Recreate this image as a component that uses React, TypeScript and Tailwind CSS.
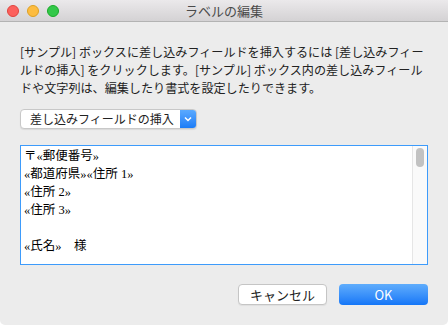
export default function App() {
  const lines = ["〒«郵便番号»", "«都道府県»«住所 1»", "«住所 2»", "«住所 3»", "", "«氏名»　様"];

  return (
    <div
      className="flex h-[325px] w-[448px] flex-col overflow-hidden rounded-b-[5px] bg-[#ececec] text-[#222]"
      style={{ fontFamily: '"Noto Sans CJK JP", "Liberation Sans", sans-serif' }}
    >
      <div className="relative flex h-[22px] shrink-0 items-center justify-center border-b border-[#b3b3b3] bg-gradient-to-b from-[#ebe9eb] to-[#d4d2d4]">
        <div className="absolute left-[7px] top-[5px] flex gap-[8px]">
          <span className="h-[12px] w-[12px] rounded-full border border-[#e0443e] bg-[#fc605c]" />
          <span className="h-[12px] w-[12px] rounded-full border border-[#dea123] bg-[#fdbc40]" />
          <span className="h-[12px] w-[12px] rounded-full border border-[#1aab29] bg-[#34c84a]" />
        </div>
        <span className="text-[13px] leading-none text-[#4a4a4a]">ラベルの編集</span>
      </div>

      <div className="flex flex-1 flex-col px-[20px]">
        <p className="mt-[21px] whitespace-nowrap text-[12.1px] leading-[18px] text-[#222]">
          [サンプル] ボックスに差し込みフィールドを挿入するには [差し込みフィー
          <br />
          ルドの挿入] をクリックします。[サンプル] ボックス内の差し込みフィール
          <br />
          ドや文字列は、編集したり書式を設定したりできます。
        </p>

        <div className="mt-[12px] flex h-[20px] w-[177px] items-stretch overflow-hidden rounded-[4px] border border-[#c8c8c8] bg-white shadow-[0_1px_1px_rgba(0,0,0,0.08)]">
          <span className="flex flex-1 items-center pl-[9px] text-[12px] leading-none text-[#222]">
            差し込みフィールドの挿入
          </span>
          <span className="flex w-[16px] items-center justify-center bg-gradient-to-b from-[#5aaaff] to-[#1a7cf7]">
            <svg width="8" height="6" viewBox="0 0 8 6">
              <path d="M1 1.5 L4 4.5 L7 1.5" fill="none" stroke="white" strokeWidth="1.5" />
            </svg>
          </span>
        </div>

        <div className="mt-[16px] flex h-[120px] w-[408px] border-[1.5px] border-[#3d9bfb] bg-white">
          <div
            className="flex-1 pl-[3px] pt-[1px] text-[12.5px] leading-[18px] text-black"
            style={{ fontFamily: '"Liberation Serif", "Noto Sans CJK JP", serif' }}
          >
            {lines.map((l, i) => (
              <div key={i} className="h-[18px] whitespace-pre">
                {l}
              </div>
            ))}
          </div>
          <div className="flex w-[15px] justify-center border-l border-[#e6e6e6] bg-[#fafafa] pt-[2px]">
            <span className="h-[19px] w-[8px] rounded-full bg-[#c2c2c2]" />
          </div>
        </div>

        <div className="mt-[19px] flex justify-end gap-[12px]">
          <button className="flex h-[21px] w-[89px] items-center justify-center rounded-[4px] border border-[#c5c5c5] bg-white text-[13px] leading-none text-[#222] shadow-[0_1px_1px_rgba(0,0,0,0.06)]">
            キャンセル
          </button>
          <button className="flex h-[21px] w-[89px] items-center justify-center rounded-[4px] bg-gradient-to-b from-[#5fadfc] to-[#1376f7] text-[13px] leading-none text-white">
            OK
          </button>
        </div>
      </div>
    </div>
  );
}
